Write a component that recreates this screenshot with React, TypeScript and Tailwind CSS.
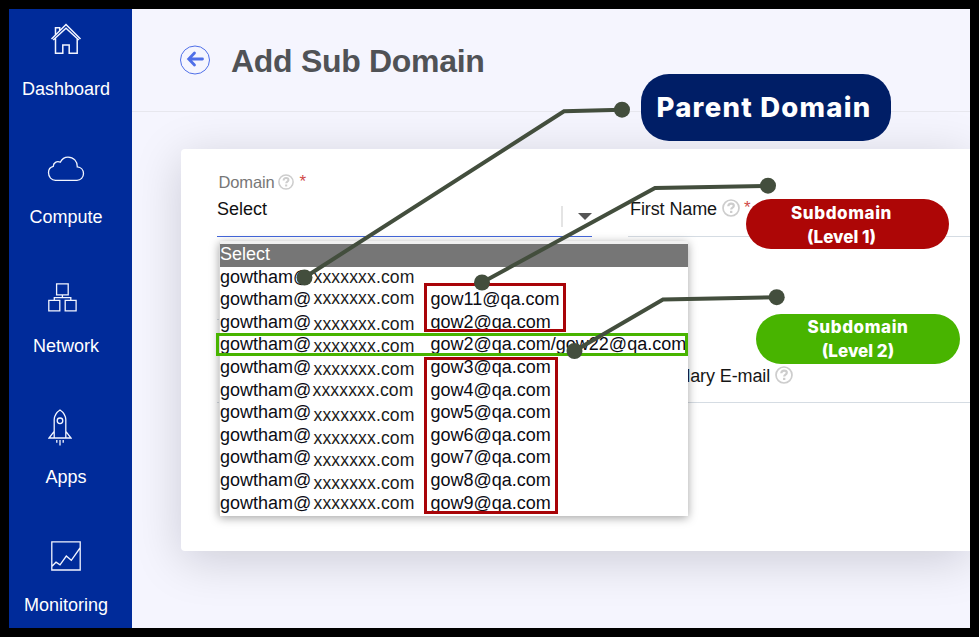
import React from "react";

const stroke = { fill: "none", stroke: "#f2f5ff", strokeWidth: 1.3 };

function HomeIcon() {
  return (
    <svg width="32" height="32" viewBox="0 0 32 32" {...stroke} strokeWidth={1.5}>
      <path d="M1.500 16 16 1.500 30.500 16M3.200 17 16 5.300 28.800 17M5.500 15.500V30.300h7.300V22h6.400v8.300h8V15.500M5.500 12V4.700h4.200v2.800" />
    </svg>
  );
}

function CloudIcon() {
  return (
    <svg width="38" height="26" viewBox="0 0 38 26" {...stroke}>
      <path d="M8.500 24.300C4.500 24.300 1.500 21.200 1.500 16.600c0-3.300 2.200-5.700 4.800-6.300 0-3.600 3.500-5.600 7-4.100C15 2.900 18 1.100 21 1.100c5.600 0 9.500 4.300 9.300 9.700 3.500.3 6.200 3 6.200 6.800 0 3.900-2.800 6.700-6.500 6.700z" />
    </svg>
  );
}

function NetworkIcon() {
  return (
    <svg width="29" height="29" viewBox="0 0 29 29" {...stroke}>
      <path d="M8.600.8h11.600v11H8.600zM.8 17.300h11v10.500H.8zM17.200 17.300h10.900v10.500H17.200zM14.400 11.800v2.700M6.300 17.300v-2.700h16.500v2.700" />
    </svg>
  );
}

function RocketIcon() {
  return (
    <svg width="24" height="38" viewBox="0 0 24 38" {...stroke}>
      <path d="M6.200 29V10.500C6.500 6 9 3 12 1c3 2 5.500 5 5.800 9.500V29M6.200 22.300 1 29h22l-5.200-6.700M12 31v5.500M8.800 31v2.800M15.200 31v2.800" />
      <circle cx="12" cy="11.800" r="2.800" />
    </svg>
  );
}

function ChartIcon() {
  return (
    <svg width="30" height="30" viewBox="0 0 30 30" {...stroke}>
      <path d="M.8.8h28.400v28.200H.8zM1 25.200l4-4 4 2.600 6.300-8.800 5 4.300L29 7" />
    </svg>
  );
}

const NAV = [
  { label: "Dashboard", icon: <HomeIcon />, box: "pt-[14px] h-[92px]", shift: "" },
  { label: "Compute", icon: <CloudIcon />, box: "pt-[55px] h-[128px]", shift: "" },
  { label: "Network", icon: <NetworkIcon />, box: "pt-[54px] h-[129px]", shift: "pr-[7px]" },
  { label: "Apps", icon: <RocketIcon />, box: "pt-[51px] h-[131px]", shift: "pr-[12px]" },
  { label: "Monitoring", icon: <ChartIcon />, box: "pt-[52px] h-[128px]", shift: "" },
];

function Help({ size }: { size: number }) {
  return (
    <svg width={size} height={size} viewBox="0 0 18 18" fill="none" stroke="#cdcdcd">
      <circle cx="9" cy="9" r="8" strokeWidth="1.700" />
      <path d="M6.300 7.300c0-1.700 1-2.700 2.800-2.700 1.600 0 2.700.9 2.700 2.200 0 1.900-2.600 1.700-2.600 3.700" strokeWidth="2.200" />
      <path d="M9.200 11.800v2.200" strokeWidth="2.300" />
    </svg>
  );
}

const ROWS = [
  { h: "h-[22px]", x: "", sub: "" },
  { h: "h-[23px]", x: "-mt-px", sub: "gow11@qa.com" },
  { h: "h-[22px]", x: "pt-[2px]", sub: "gow2@qa.com" },
  { h: "h-[23px]", x: "pt-[2px]", sub: "gow2@qa.com/gow22@qa.com" },
  { h: "h-[23px]", x: "pt-[2px]", sub: "gow3@qa.com" },
  { h: "h-[22px]", x: "-ml-px", sub: "gow4@qa.com" },
  { h: "h-[23px]", x: "pt-[3px]", sub: "gow5@qa.com" },
  { h: "h-[22px]", x: "pt-[3px]", sub: "gow6@qa.com" },
  { h: "h-[23px]", x: "pt-[3px]", sub: "gow7@qa.com" },
  { h: "h-[23px]", x: "pt-[3px]", sub: "gow8@qa.com" },
  { h: "h-[23px]", x: "", sub: "gow9@qa.com" },
];

function Dropdown() {
  return (
    <div className="absolute left-[219px] top-[241px] w-[469px] border-l border-t-[3px] border-l-[#d9d9d9] border-t-[#f0f0f0] bg-white text-[18px] leading-[20px] text-[#0c0c14] shadow-[0_2px_9px_rgba(0,0,0,0.36)]">
      <div className="h-[23px] bg-[#767676] text-white">Select</div>
      {ROWS.map((r, i) => (
        <div key={i} className={`flex items-start whitespace-nowrap ${r.h}`}>
          <span className="w-[93.500px]">gowtham@</span>
          <span className="w-[117px]">
            <span className={`block text-[17.600px] tracking-[0.120px] text-[#1c1c1c] ${r.x}`}>xxxxxxx.com</span>
          </span>
          <span>{r.sub}</span>
        </div>
      ))}
    </div>
  );
}

export default function App() {
  return (
    <div className="relative flex h-[637px] w-[979px] overflow-hidden bg-black p-[9px] font-['Liberation_Sans',Arial,sans-serif]">
      <nav className="flex w-[123px] shrink-0 flex-col bg-[#002b9a] pr-[9px] text-[18px] leading-[24px] text-white">
        {NAV.map((n) => (
          <div key={n.label} className={`flex flex-col items-center justify-between ${n.box}`}>
            <div className={n.shift}>{n.icon}</div>
            <span>{n.label}</span>
          </div>
        ))}
      </nav>

      <main className="flex w-[838px] flex-col overflow-hidden bg-[#f5f5fe]">
        <header className="flex h-[103px] shrink-0 items-center border-b border-[#e7e7ee] pl-[48px]">
          <svg width="30" height="30" viewBox="0 0 30 30" fill="none" stroke="#4f6fe8">
            <ellipse cx="15" cy="15" rx="14.500" ry="14" />
            <path d="M22.500 14H9M14.500 8 8.700 14l5.800 6" strokeWidth="2.800" strokeLinecap="round" />
          </svg>
          <h1 className="pl-[21px] pt-[2px] text-[32px] font-bold leading-none tracking-[-0.300px] text-[#505256]">Add Sub Domain</h1>
        </header>
        <section className="ml-[49px] mt-[37px] flex h-[402px] gap-9 rounded-l-[4px] bg-white pl-[36px] shadow-[0_9px_48px_rgba(0,0,20,0.17)]">
          <div className="w-[375px]">
            <div className="flex h-[88px] flex-col justify-end border-b border-[#4467dc]">
              <div className="flex h-[19px] items-center pl-[1.500px] text-[16.500px] tracking-[-0.150px] text-[#777]">
                <span className="pt-px">Domain</span>
                <span className="ml-[4px]"><Help size={16} /></span>
                <span className="ml-[5px] text-[17px] leading-[16px] text-[#d04a48]">*</span>
              </div>
              <div className="flex h-[45px] items-start justify-between text-[18px] text-[#111]">
                <span className="pt-[5px]">Select</span>
                <div className="mt-[15px] flex h-[21px] w-[31px] items-center justify-between border-l-2 border-[#e4e4e4]">
                  <span />
                  <span className="h-0 w-0 border-x-[7px] border-t-[7px] border-x-transparent border-t-[#555]" />
                </div>
              </div>
            </div>
            <div className="h-[83px] border-b border-[#d5dce3]" />
            <div className="h-[83px] border-b border-[#d5dce3]" />
          </div>
          <div className="flex-1 text-[18px] leading-[20px] tracking-[-0.100px] text-[#161616]">
            <div className="flex h-[88px] items-end border-b border-[#d5dce3] pb-[17px] pl-[2px]">
              First Name
              <span className="ml-[5px] pb-[2px]"><Help size={18} /></span>
              <span className="ml-[4px] text-[17px] leading-[22px] text-[#d04a48]">*</span>
            </div>
            <div className="h-[83px]" />
            <div className="flex h-[83px] items-end border-b border-[#d5dce3] pb-[16px] pl-[1.700px]">
              Secondary E-mail
              <span className="ml-[5px] pb-[2px]"><Help size={18} /></span>
            </div>
          </div>
        </section>
      </main>

      <Dropdown />

      <div className="absolute left-[424px] top-[283px] h-[49px] w-[142px] border-[3px] border-[#a80408]" />
      <div className="absolute left-[424px] top-[357px] h-[157px] w-[134px] border-[3px] border-[#a80408]" />
      <div className="absolute left-[216px] top-[333px] h-[23px] w-[472px] border-[3px] border-[#48b400]" />

      <div className="absolute left-[641px] top-[74px] flex h-[67px] w-[250px] justify-center whitespace-nowrap rounded-[28px] bg-[#001e66] pr-[4px] pt-[15px] font-['Inter',sans-serif] text-[27.500px] font-extrabold leading-[36px] tracking-[1.250px] text-white">
        <span>Parent Domain</span>
      </div>
      <div className="absolute left-[746px] top-[199px] flex h-[50px] w-[203px] flex-col items-center rounded-[25px] bg-[#ad0606] pr-[12px] pt-[2px] font-['Inter',sans-serif] text-[17px] font-extrabold leading-[24px] text-white">
        <span className="tracking-[0.600px]">Subdomain</span>
        <span>(Level 1)</span>
      </div>
      <div className="absolute left-[756px] top-[314px] flex h-[50px] w-[204px] flex-col items-center rounded-[25px] bg-[#48b400] pt-[1px] font-['Inter',sans-serif] text-[17px] font-extrabold leading-[24px] text-white">
        <span className="tracking-[0.600px]">Subdomain</span>
        <span>(Level 2)</span>
      </div>

      <svg className="pointer-events-none absolute inset-0" width="979" height="637" fill="none" stroke="#434e3d" strokeWidth="4">
        <path d="M304.500 277.500 564 111.200 622 109.800M482 282.500 655 188l113-2.200M574.500 351 663 299.500l114-2.300" />
        <g fill="#434e3d" stroke="none">
          <circle cx="304.500" cy="277.500" r="8" />
          <circle cx="622" cy="109.700" r="8" />
          <circle cx="482" cy="282.500" r="8" />
          <circle cx="768" cy="185.700" r="8" />
          <circle cx="574.500" cy="351" r="8" />
          <circle cx="776.700" cy="297.200" r="8" />
        </g>
      </svg>
    </div>
  );
}
